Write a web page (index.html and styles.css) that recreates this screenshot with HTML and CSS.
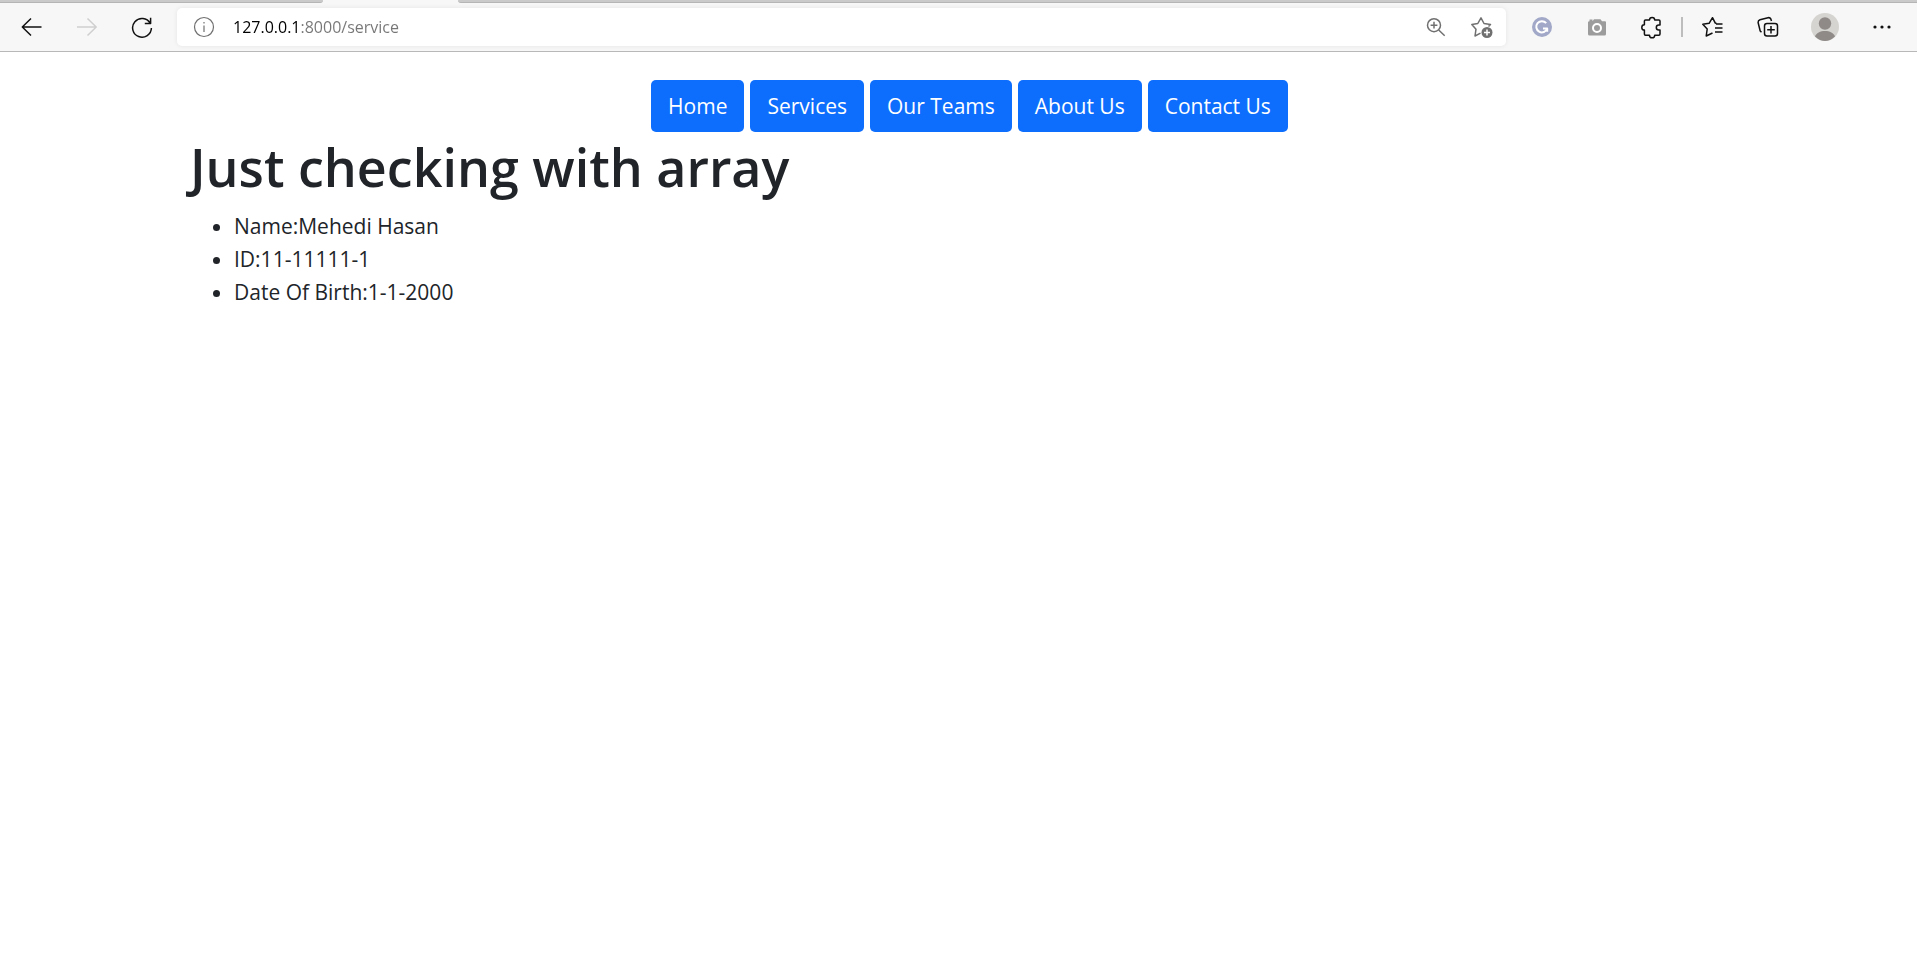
FILE: index.html
```html
<!DOCTYPE html>
<html lang="en">
<head>
<meta charset="utf-8">
<meta name="viewport" content="width=device-width, initial-scale=1">
<title>Service</title>
<link rel="stylesheet" href="styles.css">
</head>
<body>
<header class="browser">
  <div class="tabs"><div class="tab tab-left"></div><div class="tab tab-right"></div></div>
  <div class="toolbar">
    <div class="controls">
      <button class="tool" type="button" aria-label="Back"><svg class="icon" viewBox="0 0 24 24"><path d="M21.500 12H2.500M11 3.500 2.300 12l8.700 8.500"/></svg></button>
      <button class="tool" type="button" aria-label="Forward" disabled><svg class="icon" viewBox="0 0 24 24"><path d="M2 12h19M12.500 3.500 21.200 12l-8.700 8.500"/></svg></button>
      <button class="tool" type="button" aria-label="Refresh"><svg class="icon" viewBox="0 0 24 24"><path d="M20.200 8.200A9.400 9.400 0 1 0 21.400 13M20.600 2.800v5.700h-5.800"/></svg></button>
    </div>
    <div class="address">
      <button class="field-tool" type="button" aria-label="Site information"><svg class="icon muted thin" viewBox="0 0 24 24"><circle cx="12" cy="12" r="9.500"/><path d="M12 10.500v6.500M12 7v1.600"/></svg></button>
      <input class="url" type="text" aria-label="Address" value="127.0.0.1:8000/service">
      <button class="field-tool" type="button" aria-label="Zoom"><svg class="icon muted" viewBox="0 0 24 24"><circle cx="10" cy="10.200" r="6.500"/><path d="M10 6.800v6.800M6.600 10.200h6.800M14.700 15l6 5.700"/></svg></button>
      <button class="field-tool" type="button" aria-label="Add to favorites"><svg class="icon muted" viewBox="0 0 24 24"><path d="M10.500 18.200 5 21l1-6.800L1.800 9.500l6-1L11 2.800l3 5.700 6.500 1-2 2"/><circle class="solid" cx="17" cy="17.500" r="5.500"/><path class="light" d="M17 14.500v6M14 17.500h6"/></svg></button>
    </div>
    <div class="extras">
      <button class="tool" type="button" aria-label="Grammar extension"><svg class="icon" viewBox="0 0 24 24"><circle class="badge" cx="12" cy="12" r="10"/><path class="letter" d="M16.200 8.200a5.600 5.600 0 1 0 1 5.300h-4.200M17.200 13.500v3.200"/></svg></button>
      <button class="tool" type="button" aria-label="Screenshot extension"><svg class="icon" viewBox="0 0 24 24"><path class="camera" d="M4.500 4.500h3v1.800L9 4.300h6.500l1.500 2h3q1 0 1 1V19q0 1.500-1.500 1.500h-15Q3 20.500 3 19V7.300q0-1 1.500-1z"/><circle class="lens" cx="12" cy="13" r="4"/></svg></button>
      <button class="tool" type="button" aria-label="Extensions"><svg class="icon" viewBox="0 0 24 24"><path d="M5.500 5h4a2.600 2.600 0 1 1 5.200 0h4.200q1.100 0 1.100 1.100V10h-1.200a2.500 2.500 0 1 0 0 5H20v4q0 1.200-1.100 1.200h-4.200a2.600 2.600 0 0 1-5.200 0h-4q-1.100 0-1.100-1.200V15a2.600 2.600 0 0 1 0-5.200V6.100Q4.400 5 5.500 5z"/></svg></button>
      <span class="divider"></span>
      <button class="tool" type="button" aria-label="Favorites"><svg class="icon" viewBox="0 0 24 24"><path d="M11.500 18 5.200 21l1-7L1.800 9.300l6.300-1L11.500 2.700l2.800 5.400 1.200.3M14 13h7.500M14 17h7.500M15 9.100h6.500"/></svg></button>
      <button class="tool" type="button" aria-label="Collections"><svg class="icon" viewBox="0 0 24 24"><rect x="8.500" y="8.500" width="13" height="12.500" rx="2.500"/><path d="M15 11v7.500M11.200 14.800h7.600M5.500 17.200 4.200 16 2.100 7.500Q2 5.300 4 4.700l8-2q2-.4 2.800 1.200l.7 2"/></svg></button>
      <button class="tool profile" type="button" aria-label="Profile"><svg class="avatar" viewBox="0 0 28 28"><circle class="avatar-back" cx="14" cy="14" r="14"/><circle class="person" cx="14" cy="10.500" r="6.200"/><path class="person" d="M4 23.500c2-7.500 18-7.500 20 0Q19 28 14 28T4 23.500z"/></svg></button>
      <button class="tool" type="button" aria-label="Settings and more"><svg class="icon" viewBox="0 0 24 24"><g class="dots"><circle cx="5" cy="12" r="1.600"/><circle cx="12" cy="12" r="1.600"/><circle cx="19" cy="12" r="1.600"/></g></svg></button>
    </div>
  </div>
</header>
<main class="page">
  <nav class="menu">
    <a class="btn" href="#home">Home</a>
    <a class="btn" href="#services">Services</a>
    <a class="btn" href="#teams">Our Teams</a>
    <a class="btn" href="#about">About Us</a>
    <a class="btn" href="#contact">Contact Us</a>
  </nav>
  <h1 class="title">Just checking with array</h1>
  <ul class="details">
    <li>Name:Mehedi Hasan</li>
    <li>ID:11-11111-1</li>
    <li>Date Of Birth:1-1-2000</li>
  </ul>
</main>
</body>
</html>
```
FILE: styles.css
```css
* { box-sizing: border-box; }
body {
  margin: 0;
  background: #fff;
  color: #212529;
  font-family: "Segoe UI", "Open Sans", "Noto Sans", sans-serif;
  font-size: 21px;
  line-height: 33px;
}
.browser { background: #f7f7f7; border-bottom: 1px solid #b8b8b8; }
.tabs { display: flex; gap: 135px; height: 3px; }
.tab { background: #cacaca; border-bottom: 1px solid #b5b5b5; }
.tab-left { width: 323px; border-bottom-right-radius: 3px; }
.tab-right { flex: 1; border-bottom-left-radius: 3px; }
.toolbar { display: flex; align-items: center; height: 48px; }
.controls { display: flex; padding: 0 8px 0 4px; }
.tool, .field-tool {
  display: flex;
  align-items: center;
  justify-content: center;
  border: 0;
  padding: 0;
  background: none;
  color: #111;
}
.tool { width: 55px; height: 40px; }
.profile { width: 59px; }
.tool:disabled { color: #cfcfcf; }
.address {
  display: flex;
  flex: 1;
  align-items: center;
  height: 38px;
  padding: 0 1px 0 4px;
  border-radius: 5px;
  background: #fff;
  box-shadow: 0 0 5px rgba(0, 0, 0, 0.08);
}
.field-tool { width: 46px; height: 36px; }
.url {
  flex: 1;
  min-width: 0;
  border: 0;
  padding: 0 0 0 6px;
  background: linear-gradient(to right, #000 72px, #767676 72px);
  background-clip: text;
  color: transparent;
  font: 16px/24px "Segoe UI", "Open Sans", "Noto Sans", sans-serif;
}
.extras { display: flex; align-items: center; padding: 0 8px; }
.divider { width: 2px; height: 20px; margin: 0 2px; background: #bdbdbd; }
.icon {
  width: 24px;
  height: 24px;
  fill: none;
  stroke: currentColor;
  stroke-width: 1.5;
  stroke-linejoin: round;
}
.muted { color: #707070; }
.thin { stroke-width: 1.2; }
.solid { fill: #707070; stroke: none; }
.light { stroke: #fff; stroke-width: 1.5; }
.badge { fill: #a1a8c8; stroke: none; }
.letter { stroke: #fff; stroke-width: 2; }
.camera { fill: #9c9c9c; stroke: none; }
.lens { stroke: #fff; stroke-width: 2; }
.dots { fill: #111; stroke: none; }
.avatar { width: 28px; height: 28px; }
.avatar-back { fill: #d5d4d0; }
.person { fill: #8f8a87; }
.page { padding: 28px 168px 0 190px; }
.menu { display: flex; flex-wrap: wrap; justify-content: center; gap: 6px; }
.btn {
  padding: 10px 17px 9px;
  border-radius: 5px;
  background: #0d6efd;
  color: #fff;
  text-decoration: none;
}
.title { margin: 2px 0 10px; font-size: 52px; font-weight: 600; line-height: 66px; }
.details { margin: 0; padding-left: 44px; }
```
